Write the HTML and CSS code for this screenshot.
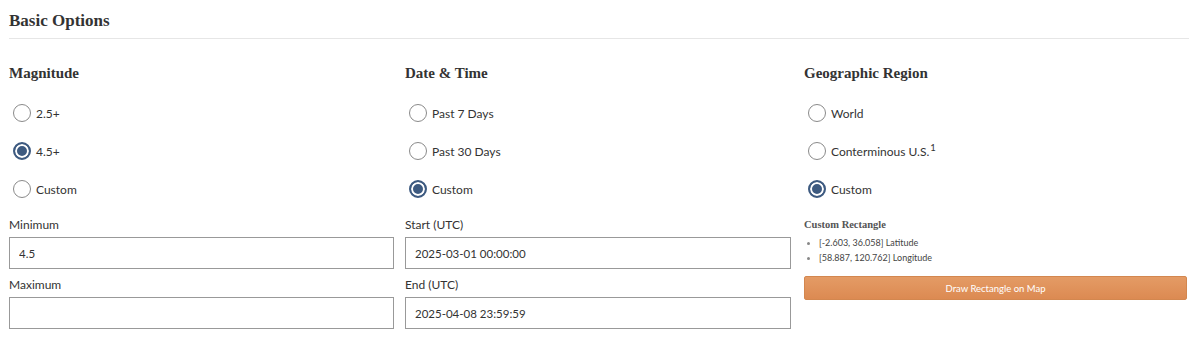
FILE: index.html
```html
<!DOCTYPE html>
<html>
<head>
<meta charset="utf-8">
<link rel="stylesheet" href="styles.css">
</head>
<body>
<div class="page">
  <h2 class="title">Basic Options</h2>
  <div class="grid">
    <section class="col">
      <h3 class="sub">Magnitude</h3>
      <label class="radio"><input type="radio" name="mag"><span>2.5+</span></label>
      <label class="radio"><input type="radio" name="mag" checked><span>4.5+</span></label>
      <label class="radio"><input type="radio" name="mag"><span>Custom</span></label>
      <label class="field-label">Minimum</label>
      <input class="text" type="text" value="4.5">
      <label class="field-label">Maximum</label>
      <input class="text" type="text" value="">
    </section>
    <section class="col">
      <h3 class="sub">Date &amp; Time</h3>
      <label class="radio"><input type="radio" name="dt"><span>Past 7 Days</span></label>
      <label class="radio"><input type="radio" name="dt"><span>Past 30 Days</span></label>
      <label class="radio"><input type="radio" name="dt" checked><span>Custom</span></label>
      <label class="field-label">Start (UTC)</label>
      <input class="text" type="text" value="2025-03-01 00:00:00">
      <label class="field-label">End (UTC)</label>
      <input class="text" type="text" value="2025-04-08 23:59:59">
    </section>
    <section class="col">
      <h3 class="sub">Geographic Region</h3>
      <label class="radio"><input type="radio" name="geo"><span>World</span></label>
      <label class="radio"><input type="radio" name="geo"><span>Conterminous U.S.<sup>1</sup></span></label>
      <label class="radio"><input type="radio" name="geo" checked><span>Custom</span></label>
      <h4 class="rect-title">Custom Rectangle</h4>
      <ul class="coords">
        <li>[-2.603, 36.058] Latitude</li>
        <li>[58.887, 120.762] Longitude</li>
      </ul>
      <button class="draw">Draw Rectangle on Map</button>
    </section>
  </div>
</div>
</body>
</html>
```

FILE: styles.css
```css
* { box-sizing: border-box; }
html, body { margin: 0; padding: 0; background: #fff; }
body {
  font-family: Lato, "Liberation Sans", sans-serif;
  color: #333;
  font-size: 12px;
}
.page { padding: 0 3px 0 9px; }
.title {
  margin: 8px 0 0;
  font-family: "Liberation Serif", serif;
  font-weight: bold;
  font-size: 17px;
  line-height: 25px;
  color: #333;
  padding-bottom: 5px;
  border-bottom: 1px solid #e6e6e6;
}
.grid {
  display: grid;
  grid-template-columns: 385px 386px 385px;
  column-gap: 11px;
}
.grid .col:nth-child(3) { margin-left: 2px; }
.col { display: flex; flex-direction: column; }
.sub {
  margin: 24px 0 11px;
  font-family: "Liberation Serif", serif;
  font-weight: bold;
  font-size: 15px;
  line-height: 20px;
  color: #333;
}
.radio {
  display: flex;
  align-items: center;
  height: 38px;
  padding-left: 4px;
  font-size: 12px;
}
.radio input {
  appearance: none;
  -webkit-appearance: none;
  margin: 0 5px 0 0;
  width: 18px;
  height: 18px;
  border: 1px solid #8a8a8a;
  border-radius: 50%;
  background: #fff;
}
.radio input:checked {
  border: 2px solid #3d5a80;
  box-shadow: inset 0 0 0 2px #fff;
  background: #3d5a80;
}
.radio sup { font-size: 9.5px; line-height: 0; vertical-align: 5px; margin-left: 1px; }
.field-label {
  margin-top: 7px;
  line-height: 18px;
  font-size: 12px;
}
.radio + .field-label { margin-top: 8px; }
.text {
  margin-top: 3px;
  height: 32px;
  width: 100%;
  border: 1px solid #999;
  padding: 0 9px;
  font-family: Lato, "Liberation Sans", sans-serif;
  font-size: 11.5px;
  color: #333;
  outline: none;
}
.rect-title {
  margin: 9px 0 0;
  font-family: "Liberation Serif", serif;
  font-weight: bold;
  font-size: 10.5px;
  line-height: 16px;
  color: #555;
}
.coords {
  margin: 2px 0 0;
  padding-left: 15px;
  font-size: 9px;
  line-height: 15px;
  color: #444;
}
.coords li::marker { color: #888; font-size: 8px; }
.draw {
  margin-top: 11px;
  height: 24px;
  width: 100%;
  border: 1px solid #d3874f;
  border-radius: 2px;
  background: linear-gradient(#e49b65, #dc8a52);
  color: #fff;
  font-family: Lato, "Liberation Sans", sans-serif;
  font-size: 9.5px;
  padding: 0;
}
```
